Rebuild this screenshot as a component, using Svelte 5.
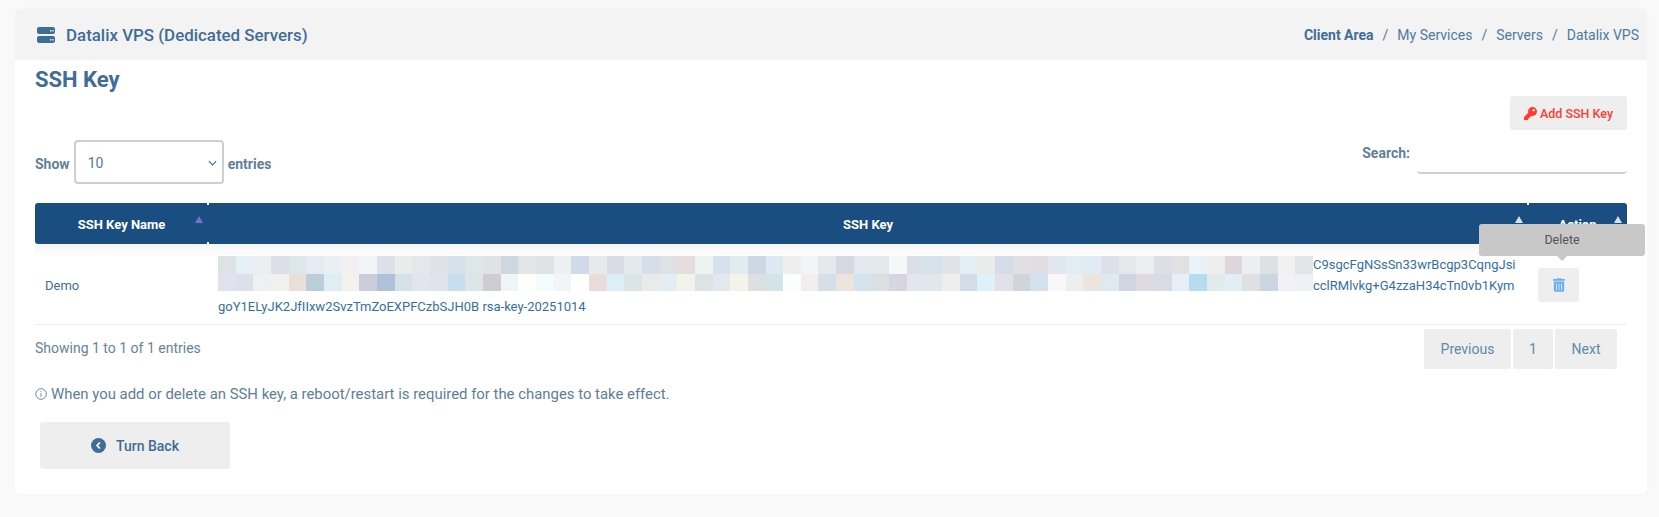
<script>
  const row1 = ['dde2e4','e3f0f6','ecedf1','dcdfe8','dce7eb','e6eaf2','e8f0f6','f2eff0','f2f5f8','dce0ea','e8ecea','e4e8ec','e0e2ea','d5e2e9','dce6eb','dfe3e4','ccd7e1','e3e4e6','e0e2e5','edf0f3','cfdaea','e8e9ed','d9dce5','e4e9f0','d6deea','dee2e6','e5dedd','eaf3ef','d5e1ec','e0edf0','ccd8e3','dde9f2','edeeed','f0f5f7','e6e9ec','d5d8e1','e3e8ef','e1e9ec','f5f8f8','d9e0e6','d6e3ec','e0e3e7','e3eff6','e9ebe9','d4dcea','e0e0e4','e2dce3','e0e7ee','e2edf3','e0ecf4','dde0e8','e4e8ea','eaeef0','dcdfe7','e1e1e3','e9f2f9','eeeeee','ddd6db','ecefef','dde1e4','f1f2f0','e3e4e7'];
  const row2 = ['e0e2ee','dddfe9','eef1f2','f3f1ef','e8dfd9','bbcdd8','e0edf2','f3f2ee','cbcdda','b0c2d9','d5e1e9','e1e5ed','e2e2ec','c6deee','dde5e7','cecdd3','eef4f7','fffffb','f1fdfd','f3f4f7','ffffff','e9dcda','dceef7','dde4e6','e9ebea','e3edf3','f2f4ec','dde2e4','e3e8ef','f5f2ec','dedfe1','d3e4e9','fafefc','f3eeed','d6dfe8','eee4de','d3e4ef','dcdfe3','d7d5e1','e3e6ef','e0e8ea','eeeeee','d3dce7','ddf1fb','e3e1e8','d0d4db','d5e1ec','fbf7f6','ecefef','ebe5dd','deeaf0','cfd5e1','dfd9e1','d6dbe4','e6eff5','b5dcf0','e1eaec','e1eef5','e0e0e2','cbd6e3','f1f1f7','edf2f6'];
  const mosaic = [...row1, ...row2];
  const crumbs = ['My Services', 'Servers', 'Datalix VPS'];
</script>

<div class="page">
  <div class="card">
    <header class="topbar">
      <div class="title">
        <svg class="server" viewBox="0 0 18 16" aria-hidden="true">
          <path fill-rule="evenodd" d="M2 0h14a2 2 0 0 1 2 2v3a2 2 0 0 1-2 2H2a2 2 0 0 1-2-2V2a2 2 0 0 1 2-2zm11 3v1.4h1.4V3zm2.4 0v1.4h1.2V3zM2 9h14a2 2 0 0 1 2 2v3a2 2 0 0 1-2 2H2a2 2 0 0 1-2-2v-3a2 2 0 0 1 2-2zm11 3v1.4h1.4V12zm2.4 0v1.4h1.2V12z"/>
        </svg>
        <span>Datalix VPS (Dedicated Servers)</span>
      </div>
      <nav class="crumbs">
        <b>Client Area</b>
        {#each crumbs as c}
          <i>/</i><span>{c}</span>
        {/each}
      </nav>
    </header>

    <div class="content">
      <h2>SSH Key</h2>

      <div class="add-row">
        <button class="add">
          <svg viewBox="0 0 512 512" aria-hidden="true"><path d="M512 176.001C512 273.203 433.202 352 336 352c-11.22 0-22.19-1.062-32.827-3.069l-24.012 27.014A23.999 23.999 0 0 1 261.223 384H224v40c0 13.255-10.745 24-24 24h-40v40c0 13.255-10.745 24-24 24H24c-13.255 0-24-10.745-24-24v-78.059c0-6.365 2.529-12.47 7.029-16.971l161.802-161.802C163.108 213.814 160 195.271 160 176 160 78.798 238.797.001 335.999 0 433.488-.001 512 78.511 512 176.001zM336 128c0 26.51 21.49 48 48 48s48-21.49 48-48-21.49-48-48-48-48 21.49-48 48z"/></svg>
          Add SSH Key
        </button>
      </div>

      <div class="controls">
        <div class="length">
          <span class="lbl">Show</span>
          <div class="select">
            <span>10</span>
            <svg viewBox="0 0 10 6" aria-hidden="true"><path d="M1 1l4 4 4-4"/></svg>
          </div>
          <span class="lbl">entries</span>
        </div>
        <div class="search">
          <span>Search:</span>
          <input type="text" />
        </div>
      </div>

      <table>
        <thead>
          <tr>
            <th class="c1">SSH Key Name<em class="sort active"></em></th>
            <th class="c2">SSH Key<em class="sort"></em></th>
            <th class="c3">Action<em class="sort"></em></th>
          </tr>
        </thead>
        <tbody>
          <tr>
            <td class="name">Demo</td>
            <td class="key">
              <div class="key-top">
                <div class="mosaic">
                  {#each mosaic as color}
                    <s style="background:#{color}"></s>
                  {/each}
                </div>
                <div class="key-lines">
                  <div>C9sgcFgNSsSn33wrBcgp3CqngJsi</div>
                  <div>cclRMlvkg+G4zzaH34cTn0vb1Kym</div>
                </div>
              </div>
              <div>goY1ELyJK2JfIIxw2SvzTmZoEXPFCzbSJH0B rsa-key-20251014</div>
            </td>
            <td class="action">
              <button class="trash">
                <span class="tip">Delete</span>
                <svg viewBox="0 0 448 512" aria-hidden="true"><path d="M32 464a48 48 0 0 0 48 48h288a48 48 0 0 0 48-48V128H32zm272-256a16 16 0 0 1 32 0v224a16 16 0 0 1-32 0zm-96 0a16 16 0 0 1 32 0v224a16 16 0 0 1-32 0zm-96 0a16 16 0 0 1 32 0v224a16 16 0 0 1-32 0zM432 32H312l-9.4-18.7A24 24 0 0 0 281.1 0H166.8a23.72 23.72 0 0 0-21.4 13.3L136 32H16A16 16 0 0 0 0 48v32a16 16 0 0 0 16 16h416a16 16 0 0 0 16-16V48a16 16 0 0 0-16-16z"/></svg>
              </button>
            </td>
          </tr>
        </tbody>
      </table>

      <div class="foot">
        <span>Showing 1 to 1 of 1 entries</span>
        <div class="pager">
          <button>Previous</button>
          <button>1</button>
          <button>Next</button>
        </div>
      </div>

      <p class="note">
        <svg viewBox="0 0 12 12" aria-hidden="true"><circle cx="6" cy="6" r="5.3"/><path d="M6 5.2v3.6M6 3.2v1"/></svg>
        When you add or delete an SSH key, a reboot/restart is required for the changes to take effect.
      </p>

      <button class="back">
        <svg viewBox="0 0 16 16" aria-hidden="true"><circle cx="8" cy="8" r="8"/><path d="M9.5 4.8L6.5 8l3 3.2"/></svg>
        Turn Back
      </button>
    </div>
  </div>
</div>

<style>
  :global(body) { margin: 0; background: #f9f9f9; }

  .page {
    width: 1659px;
    height: 517px;
    box-sizing: border-box;
    padding: 9px 12px 0 15px;
    font-family: "Roboto", "Liberation Sans", sans-serif;
    font-size: 13px;
    color: #5f7f9a;
    overflow: hidden;
  }

  .card {
    background: #fff;
    border-radius: 6px;
    box-shadow: 0 0 6px rgba(0, 0, 0, .02);
  }

  .topbar {
    height: 51px;
    background: #f3f3f3;
    border-radius: 6px 6px 0 0;
    display: flex;
    align-items: center;
    justify-content: space-between;
    padding: 0 8px 0 22px;
  }
  .title { display: flex; align-items: center; gap: 11px; font-size: 16.9px; font-weight: 500; color: #3f6d96; }
  .server { width: 18px; height: 16px; fill: #3f6d96; }
  .crumbs { display: flex; align-items: center; font-size: 14px; color: #4f7ba0; }
  .crumbs b { font-weight: 700; color: #3f6d96; }
  .crumbs i { font-style: normal; margin: 0 9px; }

  .content { padding: 0 20px 25px; }

  h2 { margin: 8px 0 0; font-size: 22px; line-height: 24px; font-weight: 700; color: #3f6d96; }

  button { font: inherit; border: 0; cursor: pointer; }

  .add-row { display: flex; justify-content: flex-end; margin-top: 4px; }
  .add {
    width: 117px;
    height: 34px;
    background: #eeeeee;
    border-radius: 3px;
    color: #ff3b30;
    font-size: 12.5px;
    font-weight: 500;
    display: flex;
    align-items: center;
    justify-content: center;
    gap: 3px;
    padding: 0;
  }
  .add svg { width: 13px; height: 13px; fill: #ff3b30; }

  .controls { display: flex; justify-content: space-between; margin-top: 10px; height: 44px; }
  .length { display: flex; align-items: center; gap: 4px; font-weight: 700; font-size: 14px; color: #5f7f9a; }
  .lbl { padding-top: 3px; }
  .select {
    width: 150px;
    height: 44px;
    box-sizing: border-box;
    border: 2px solid #cfcfcf;
    border-radius: 4px;
    display: flex;
    align-items: center;
    justify-content: space-between;
    padding: 1px 5px 0 12px;
    font-weight: 400;
    color: #4f7ba0;
  }
  .select svg { width: 9px; height: 6px; fill: none; stroke: #3f6d96; stroke-width: 1.3; }

  .search { display: flex; gap: 7px; font-size: 14px; font-weight: 700; color: #5f7f9a; padding-top: 3px; }
  .search span { line-height: 20px; }
  .search input {
    width: 210px;
    height: 28px;
    margin-top: 3px;
    box-sizing: border-box;
    border: 0;
    border-bottom: 2px solid #cfcfcf;
    border-radius: 0 0 4px 4px;
    outline: 0;
    background: #fff;
  }

  table {
    width: 1592px;
    margin-top: 19px;
    border-collapse: separate;
    border-spacing: 0;
    table-layout: fixed;
  }
  th {
    height: 41px;
    padding: 1px 0 0;
    box-sizing: border-box;
    position: relative;
    background: #1a4d80;
    color: #fff;
    font-size: 13px;
    font-weight: 700;
    text-align: center;
  }
  th.c1 { width: 173px; border-radius: 3px 0 0 3px; }
  th.c3 { width: 99px; border-radius: 0 3px 3px 0; }
  th.c1::after, th.c2::after {
    content: "";
    position: absolute;
    right: -1px;
    top: 0;
    bottom: 0;
    width: 2px;
    background: linear-gradient(#fff 2px, transparent 2px, transparent 39px, #fff 39px);
    z-index: 1;
  }
  .sort {
    position: absolute;
    top: 13px;
    right: 5px;
    width: 0;
    height: 0;
    border-left: 4px solid transparent;
    border-right: 4px solid transparent;
    border-bottom: 7px solid #d8dfe6;
  }
  .sort.active { border-bottom-color: #7a70c8; }

  td {
    padding: 0;
    border-bottom: 1px solid #ececec;
    background: linear-gradient(#f6f6f6, #fff 14px);
    color: #356f9f;
    font-size: 13px;
    vertical-align: middle;
  }
  .name { padding: 2px 0 0 10px; color: #3f6d96; }
  .key { padding: 10px 0 7px 10px; line-height: 21px; white-space: nowrap; }
  .key-top { display: flex; }
  .mosaic {
    width: 1095px;
    height: 35px;
    margin-top: 2px;
    display: grid;
    grid-template-columns: repeat(62, 1fr);
    grid-template-rows: 18px 17px;
    flex: none;
  }
  .mosaic s { display: block; }
  .key-lines { width: 201px; text-align: right; }

  .action { padding: 2px 0 0 10px; }
  .trash {
    position: relative;
    width: 41px;
    height: 34px;
    padding: 0;
    background: #eeeeee;
    border-radius: 3px;
    display: flex;
    align-items: center;
    justify-content: center;
  }
  .trash svg { width: 12px; height: 14px; fill: #66aef5; }
  .tip {
    position: absolute;
    left: -59px;
    bottom: calc(100% + 12px);
    width: 166px;
    height: 32px;
    line-height: 32px;
    background: #c8c8c8;
    border-radius: 3px;
    color: #555;
    font-size: 12.5px;
    font-weight: 400;
    text-align: center;
    z-index: 2;
  }
  .tip::after {
    content: "";
    position: absolute;
    left: 50%;
    top: 100%;
    margin-left: -5px;
    border-left: 5px solid transparent;
    border-right: 5px solid transparent;
    border-top: 5px solid #c8c8c8;
  }

  .foot {
    display: flex;
    justify-content: space-between;
    align-items: center;
    margin-top: 4px;
    padding-right: 10px;
    height: 40px;
    font-size: 14px;
    color: #668399;
  }
  .foot > span { position: relative; top: -1px; }
  .pager { display: flex; gap: 2px; }
  .pager button {
    height: 40px;
    background: #eeeeee;
    border-radius: 2px;
    color: #5f8aa8;
    font-size: 14px;
    padding: 0;
    width: 40px;
  }
  .pager button:first-child { width: 87px; }
  .pager button:last-child { width: 62px; }

  .note {
    margin: 15px 0 0;
    font-size: 14.9px;
    line-height: 20px;
    display: flex;
    align-items: center;
    gap: 4px;
    color: #607d99;
  }
  .note svg { width: 12px; height: 12px; fill: none; stroke: #607d99; stroke-width: .9; }

  .back {
    display: flex;
    align-items: center;
    justify-content: center;
    gap: 10px;
    width: 190px;
    height: 47px;
    margin: 18px 0 0 5px;
    padding: 0;
    background: #eeeeee;
    border-radius: 3px;
    color: #3f6d96;
    font-size: 14px;
    font-weight: 500;
  }
  .back svg { width: 15px; height: 15px; }
  .back circle { fill: #3f6d96; }
  .back path { fill: none; stroke: #fff; stroke-width: 1.8; }
</style>
